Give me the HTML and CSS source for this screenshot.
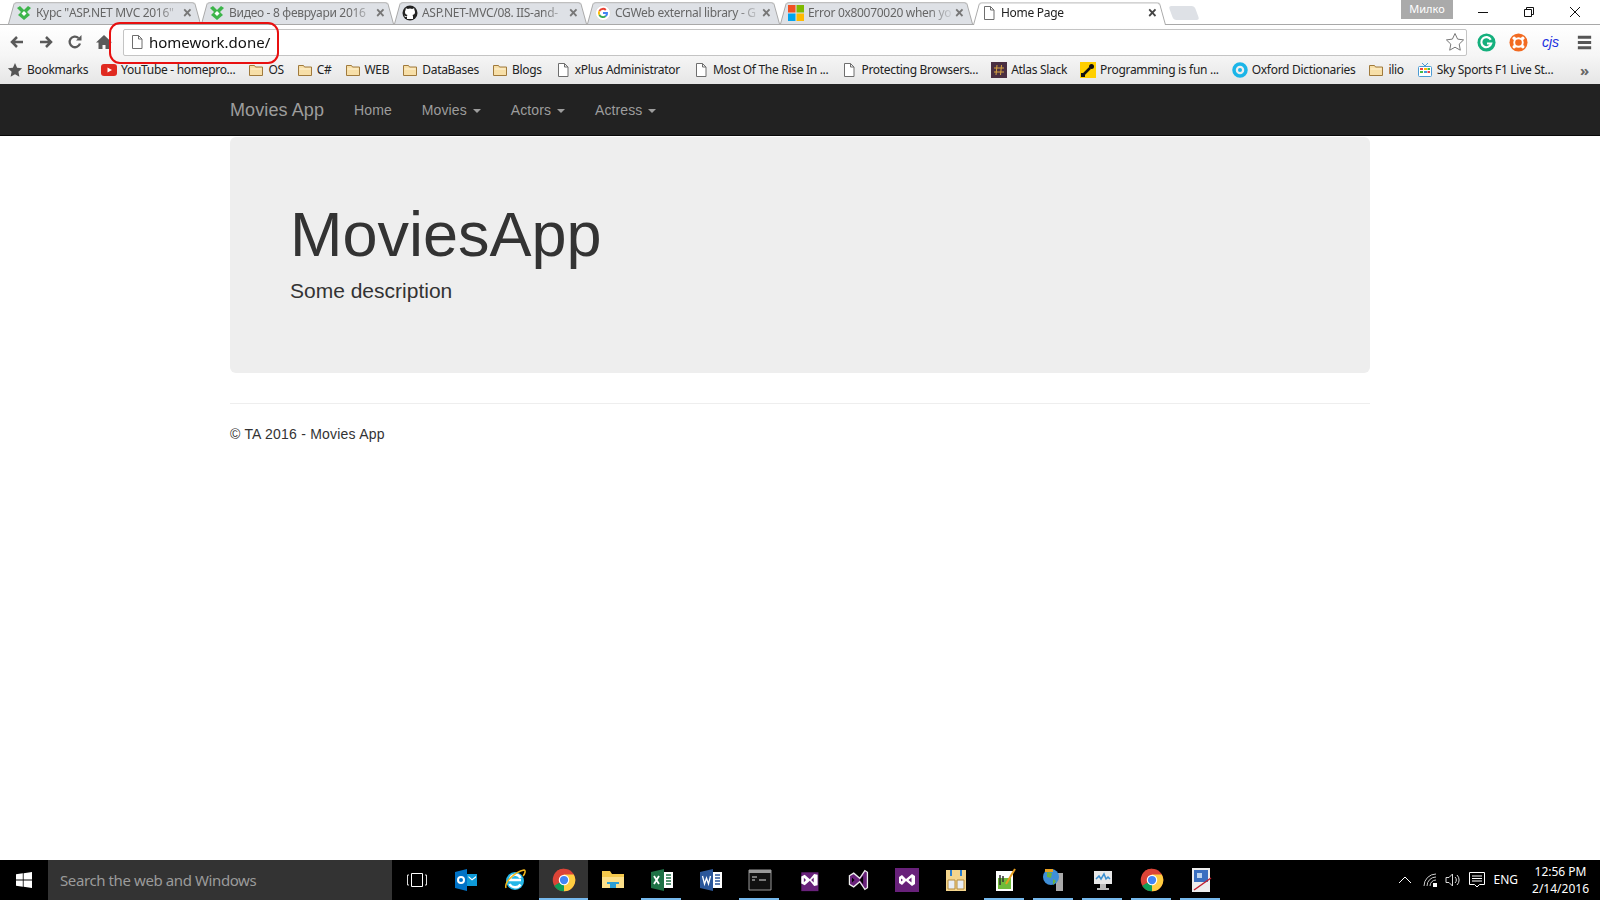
FILE: index.html
```html
<!DOCTYPE html>
<html lang="en">
<head>
    <meta charset="UTF-8">
    <meta name="viewport" content="width=device-width, initial-scale=1.0">
    <title>Home Page</title>
    <link rel="stylesheet" href="styles.css">
</head>
<body>

    <svg class="defs" width="0" height="0">
        <symbol id="page" viewBox="0 0 16 16"><path d="M3.500 1.500h6l3.500 3.500v9.500h-9.500z M9.500 1.500v3.500h3.500" fill="#fff" stroke="#6e6e6e"/></symbol>
        <symbol id="folder" viewBox="0 0 16 16"><path d="M1.500 3.500h5l1 1.500h7v8.500h-13z" fill="#f7dfa8" stroke="#a07a3c"/><path d="M2.500 6.500h11v1h-11z" fill="#fff3d4"/></symbol>
        <symbol id="academy" viewBox="0 0 16 16"><path d="M1 3l3-2 4 4 4-4 3 2-4 4 3 3-6 5-6-5 3-3z" fill="#3db54a"/><path d="M8 6l2.500 2.500-2.500 2.500-2.500-2.500z" fill="#fff"/></symbol>
        <symbol id="chrome" viewBox="0 0 32 32">
            <circle cx="16" cy="16" r="15" fill="#db4437"/>
            <path d="M16 16L3 23.500A15 15 0 0 0 16 31l7-15z" fill="#0f9d58"/>
            <path d="M16 31A15 15 0 0 0 29 8.500H16z" fill="#ffcd40"/>
            <path d="M16 1A15 15 0 0 0 3 8.500L10 20z" fill="#db4437"/>
            <circle cx="16" cy="16" r="7" fill="#fff"/><circle cx="16" cy="16" r="5.500" fill="#4285f4"/>
        </symbol>
    </svg>

    <!-- Browser window -->
    <div class="tabstrip">
        <div class="tab">
            <svg class="ico"><use href="#academy"/></svg>
            <span class="tab-title">Курс "ASP.NET MVC 2016"</span><span class="tab-close">&times;</span>
        </div>
        <div class="tab">
            <svg class="ico"><use href="#academy"/></svg>
            <span class="tab-title">Видео - 8 февруари 2016</span><span class="tab-close">&times;</span>
        </div>
        <div class="tab">
            <svg class="ico" viewBox="0 0 16 16"><circle cx="8" cy="8" r="7.500" fill="#222"/><path d="M5 14v-2c-2 .4-2.500-1-3-1.500 1 0 1.300 1 3 1 0-1 .3-1.300.5-1.500C3.500 9.700 3 8.500 3 7c0-.8.3-1.400.7-1.900-.2-.6-.1-1.300.2-1.800.8 0 1.400.4 1.800.7a6 6 0 0 1 4.600 0c.4-.3 1-.7 1.800-.7.3.5.4 1.200.2 1.800.4.500.7 1.100.7 1.900 0 1.500-.5 2.700-2.500 3 .2.300.5.700.5 1.500v2.500z" fill="#fff"/></svg>
            <span class="tab-title">ASP.NET-MVC/08. IIS-and-</span><span class="tab-close">&times;</span>
        </div>
        <div class="tab">
            <svg class="ico" viewBox="0 0 16 16"><circle cx="8" cy="8" r="7.500" fill="#fff" stroke="#ddd"/><path d="M11.500 4.300A5 5 0 0 0 3.600 5.500l1.500 1.200a3.100 3.100 0 0 1 5-1z" fill="#ea4335"/><path d="M3.600 5.500a5 5 0 0 0 0 5l1.500-1.200a3 3 0 0 1 0-2.600z" fill="#fbbc05"/><path d="M3.600 10.500a5 5 0 0 0 7.700 1.200L9.900 10.500a3.100 3.100 0 0 1-4.800-1.200z" fill="#34a853"/><path d="M13 7H8v2h2.900a2.500 2.500 0 0 1-1 1.500l1.400 1.200A5 5 0 0 0 13 7z" fill="#4285f4"/></svg>
            <span class="tab-title">CGWeb external library - G</span><span class="tab-close">&times;</span>
        </div>
        <div class="tab">
            <svg class="ico" viewBox="0 0 16 16"><path d="M0 0h7.500v7.500H0z" fill="#f25022"/><path d="M8.500 0H16v7.500H8.500z" fill="#7fba00"/><path d="M0 8.500h7.500V16H0z" fill="#00a4ef"/><path d="M8.500 8.500H16V16H8.500z" fill="#ffb900"/></svg>
            <span class="tab-title">Error 0x80070020 when yo</span><span class="tab-close">&times;</span>
        </div>
        <div class="tab active">
            <svg class="ico"><use href="#page"/></svg>
            <span class="tab-title">Home Page</span><span class="tab-close">&times;</span>
        </div>
        <div class="new-tab"></div>
        <div class="profile">Милко</div>
        <div class="win-controls">
            <svg width="12" height="12" viewBox="0 0 12 12"><path d="M1 6.500h10" stroke="#111"/></svg>
            <svg width="12" height="12" viewBox="0 0 12 12"><path d="M1.500 3.500h7v7h-7z M3.500 3.500v-2h7v7h-2" fill="none" stroke="#111"/></svg>
            <svg width="12" height="12" viewBox="0 0 12 12"><path d="M1 1l10 10M11 1L1 11" stroke="#111"/></svg>
        </div>
    </div>

    <div class="toolbar">
        <svg class="nav-ico" viewBox="0 0 16 16"><path d="M14 8H3M8 3L3 8l5 5" fill="none" stroke="#5a5a5a" stroke-width="2.500"/></svg>
        <svg class="nav-ico" viewBox="0 0 16 16"><path d="M2 8h11M8 3l5 5-5 5" fill="none" stroke="#5a5a5a" stroke-width="2.500"/></svg>
        <svg class="nav-ico" viewBox="0 0 16 16"><path d="M13 9.500A5.300 5.300 0 1 1 11.500 4" fill="none" stroke="#5a5a5a" stroke-width="2.300"/><path d="M9 6.500h5.500V1z" fill="#5a5a5a"/></svg>
        <svg class="nav-ico" viewBox="0 0 16 16"><path d="M8 1L0 8.500h2.500V15h4v-4h3v4h4V8.500H16z" fill="#5a5a5a"/></svg>
        <div class="omnibox">
            <svg class="ico"><use href="#page"/></svg>
            <span class="url">homework.done/</span>
            <svg class="star" viewBox="0 0 20 20"><path d="M10 1.500l2.600 5.600 6 .8-4.400 4.200 1.100 6.100L10 15.200l-5.300 3 1.100-6.100-4.400-4.200 6-.8z" fill="#fff" stroke="#777"/></svg>
        </div>
        <div class="extensions">
            <svg class="ext" viewBox="0 0 20 20"><circle cx="10" cy="10" r="9.500" fill="#15b07d"/><path d="M14.500 7A5.300 5.300 0 1 0 15 11h-4.500" fill="none" stroke="#fff" stroke-width="2.200"/></svg>
            <svg class="ext" viewBox="0 0 20 20"><circle cx="10" cy="10" r="9.500" fill="#f26a21"/><circle cx="10" cy="10" r="4.500" fill="none" stroke="#fff" stroke-width="2"/><circle cx="5.500" cy="5.500" r="1.800" fill="#fff"/><circle cx="14.500" cy="5.500" r="1.800" fill="#fff"/><circle cx="5.500" cy="14.500" r="1.800" fill="#fff"/><circle cx="14.500" cy="14.500" r="1.800" fill="#fff"/></svg>
            <span class="cjs">cjs</span>
            <svg class="ext menu-ico" viewBox="0 0 20 20"><path d="M3 3h14v3H3zM3 8.500h14v3H3zM3 14h14v3H3z" fill="#555"/></svg>
        </div>
    </div>

    <div class="bookmarks">
        <a class="bm"><svg class="ico" viewBox="0 0 16 16"><path d="M8 1l2.100 4.700 5 .6-3.700 3.400 1 5L8 12.200l-4.400 2.500 1-5L.9 6.300l5-.6z" fill="#555"/></svg>Bookmarks</a>
        <a class="bm"><svg class="ico" viewBox="0 0 16 16"><rect y="2" width="16" height="12" rx="3" fill="#e02a20"/><path d="M6.500 5.500v5L11 8z" fill="#fff"/></svg>YouTube - homepro...</a>
        <a class="bm"><svg class="ico"><use href="#folder"/></svg>OS</a>
        <a class="bm"><svg class="ico"><use href="#folder"/></svg>C#</a>
        <a class="bm"><svg class="ico"><use href="#folder"/></svg>WEB</a>
        <a class="bm"><svg class="ico"><use href="#folder"/></svg>DataBases</a>
        <a class="bm"><svg class="ico"><use href="#folder"/></svg>Blogs</a>
        <a class="bm"><svg class="ico"><use href="#page"/></svg>xPlus Administrator</a>
        <a class="bm"><svg class="ico"><use href="#page"/></svg>Most Of The Rise In ...</a>
        <a class="bm"><svg class="ico"><use href="#page"/></svg>Protecting Browsers...</a>
        <a class="bm"><svg class="ico" viewBox="0 0 16 16"><path d="M0 0h16v16H0z" fill="#4a2f42"/><path d="M6 3L5 13M10.500 3l-1 10M3 6h10M3 10h10" stroke="#d9a441"/></svg>Atlas Slack</a>
        <a class="bm"><svg class="ico" viewBox="0 0 16 16"><path d="M0 0h16v16H0z" fill="#ffcf00"/><path d="M2 14l8-8" stroke="#111" stroke-width="2.500"/><circle cx="11.500" cy="4.500" r="2.500" fill="#111"/><path d="M1 11h4v4H1z" fill="#111"/></svg>Programming is fun ...</a>
        <a class="bm"><svg class="ico" viewBox="0 0 16 16"><circle cx="8" cy="8" r="6" fill="none" stroke="#1cb5e8" stroke-width="3.500"/><circle cx="8" cy="8" r="2" fill="#1cb5e8"/></svg>Oxford Dictionaries</a>
        <a class="bm"><svg class="ico"><use href="#folder"/></svg>ilio</a>
        <a class="bm"><svg class="ico" viewBox="0 0 16 16"><rect x="1.500" y="4.500" width="13" height="10" rx="1" fill="#fff" stroke="#4a9bd4"/><path d="M5 1l3 3 3-3" fill="none" stroke="#4a9bd4"/><path d="M3 6h3v2H3z" fill="#e44"/><path d="M7 6h3v2H7z" fill="#fb0"/><path d="M10.500 6H13v2h-2.500z" fill="#4b4"/><path d="M3 9h3v2H3z" fill="#4b4"/><path d="M7 9h3v2H7z" fill="#49d"/><path d="M10.500 9H13v2h-2.500z" fill="#e44"/></svg>Sky Sports F1 Live St...</a>
        <span class="bm-more">&raquo;</span>
    </div>

    <!-- Page -->
    <nav class="navbar">
        <div class="wrap nav-row">
            <a class="brand">Movies App</a>
            <a class="nav-link">Home</a>
            <a class="nav-link">Movies <span class="caret"></span></a>
            <a class="nav-link">Actors <span class="caret"></span></a>
            <a class="nav-link">Actress <span class="caret"></span></a>
        </div>
    </nav>

    <main class="page">
        <div class="wrap">
            <div class="jumbotron">
                <h1>MoviesApp</h1>
                <p>Some description</p>
            </div>
            <hr>
            <footer class="site-footer">&copy; TA 2016 - Movies App</footer>
        </div>
    </main>

    <!-- Windows taskbar -->
    <div class="taskbar">
        <div class="start">
            <svg width="16" height="16" viewBox="0 0 16 16"><path d="M0 2.300l6.800-1v6.300H0zM7.600 1.200L16 0v7.600H7.600zM0 8.400h6.800v6.300l-6.800-1zM7.600 8.400H16V16l-8.400-1.200z" fill="#fff"/></svg>
        </div>
        <div class="search">Search the web and Windows</div>
        <div class="task-icons">
            <div class="task"><svg class="tico" viewBox="0 0 24 24"><path d="M6.500 5.500h11v13h-11z" fill="none" stroke="#fff"/><path d="M4 7H2.500v10H4M20 7h1.500v10H20" fill="none" stroke="#ddd"/></svg></div>
            <div class="task"><svg class="tico" viewBox="0 0 24 24"><path d="M1 4l12-3v22L1 20z" fill="#0072c6"/><path d="M13 6h10v12H13z" fill="#0e9ad8"/><path d="M14.500 8l3.500 3 4-3v1.500l-4 3-3.500-3z" fill="#fff"/><circle cx="7" cy="12" r="3" fill="none" stroke="#fff" stroke-width="2"/></svg></div>
            <div class="task"><svg class="tico" viewBox="0 0 24 24"><circle cx="12" cy="13" r="9" fill="#25b7e8"/><path d="M6 12h12M6.500 16a6.500 6.500 0 0 0 11 .5" fill="none" stroke="#fff" stroke-width="2.500"/><path d="M7 12a5.500 5.500 0 0 1 10.500-2" fill="none" stroke="#fff" stroke-width="2.500"/><path d="M3 20C1 14 12 4 21 2c2 0 1 4-1 6" fill="none" stroke="#f4b81c" stroke-width="1.500"/></svg></div>
            <div class="task active"><svg class="tico"><use href="#chrome"/></svg></div>
            <div class="task"><svg class="tico" viewBox="0 0 24 24"><path d="M1 3h8l2 3h12v14H1z" fill="#f5c94c"/><path d="M1 9h22v11H1z" fill="#fde08a"/><path d="M9 15h6v5H9z" fill="#2a9fd8"/><path d="M6 14h12v2H6z" fill="#2a9fd8"/></svg></div>
            <div class="task run"><svg class="tico" viewBox="0 0 24 24"><path d="M1 4l13-3v22L1 20z" fill="#1e7145"/><path d="M14 4h9v16h-9z" fill="#fff"/><path d="M16 7h5M16 10h5M16 13h5M16 16h5" stroke="#1e7145" stroke-width="1.500"/><path d="M4 8l5 8M9 8l-5 8" stroke="#fff" stroke-width="1.800"/></svg></div>
            <div class="task"><svg class="tico" viewBox="0 0 24 24"><path d="M1 4l13-3v22L1 20z" fill="#2b579a"/><path d="M14 4h9v16h-9z" fill="#fff"/><path d="M16 7h5M16 10h5M16 13h5M16 16h5" stroke="#2b579a" stroke-width="1.500"/><path d="M3.500 8l2 8 2-6 2 6 2-8" fill="none" stroke="#fff" stroke-width="1.300"/></svg></div>
            <div class="task run"><svg class="tico" viewBox="0 0 24 24"><path d="M1 2h22v20H1z" fill="#111" stroke="#999"/><path d="M1 2h22v3H1z" fill="#999"/><path d="M4 9h5M4 12h3M11 12h7" stroke="#ddd"/></svg></div>
            <div class="task"><svg class="tico" viewBox="0 0 24 28"><path d="M3 5h20v22H3z" fill="#68217a"/><path d="M3 10l4-2 6 5 5-6 4 1v12l-4 1-5-6-6 5-4-2z" fill="#fff"/><path d="M6 11.500v5l2.500-2.500z M17.500 11v6l-3-3z" fill="#68217a"/></svg></div>
            <div class="task"><svg class="tico" viewBox="0 0 24 28"><path d="M2 9l5-3 7 6 6-9 3 2v18l-3 2-6-9-7 6-5-3z" fill="#68217a" stroke="#eee" stroke-width="1.500"/><path d="M5 11v6l3-3z M18 9v10l-4-5z" fill="#000"/></svg></div>
            <div class="task"><svg class="tico" viewBox="0 0 24 24"><path d="M0 0h24v24H0z" fill="#68217a"/><path d="M4 9l3-2 4 4 6-5 3 2v8l-3 2-6-5-4 4-3-2z" fill="#fff"/><path d="M6 10.500v3l2-1.500z M16.500 9.500v5l-3-2.500z" fill="#68217a"/></svg></div>
            <div class="task"><svg class="tico" viewBox="0 0 24 24"><path d="M2 2h20v21H2z" fill="#f4d58d"/><path d="M7 2v6M17 2v6" stroke="#2a7fd0" stroke-width="2"/><path d="M4 12h7v9H4zM13 12h7v9h-7z" fill="#e8eef6" stroke="#b58a3a"/></svg></div>
            <div class="task run"><svg class="tico" viewBox="0 0 24 24"><path d="M3 3h17v20H3z" fill="#fff"/><path d="M5 10h13v11H5z" fill="#6fbb3a"/><path d="M7 7v10M10 8v6" stroke="#333" stroke-width="1.500"/><path d="M13 16L22 1" stroke="#e8a020" stroke-width="2"/></svg></div>
            <div class="task run"><svg class="tico" viewBox="0 0 24 24"><path d="M14 5h7v18h-7z" fill="#aaa"/><circle cx="9" cy="9" r="8" fill="#3f8fd8"/><path d="M5 4l5 1-1 5-4-1zM11 11l3 2-3 4z" fill="#6cb33f"/><path d="M3 1h8v3H3z" fill="#e8a020"/></svg></div>
            <div class="task run"><svg class="tico" viewBox="0 0 24 24"><path d="M3 3h18v13H3z" fill="#e8e8e8"/><path d="M5 11l3-3 2 3 3-5 2 5 2-2 2 2" fill="none" stroke="#3a8fd0" stroke-width="1.500"/><path d="M9 16h6v4h3v2H6v-2h3z" fill="#bbb"/></svg></div>
            <div class="task run"><svg class="tico"><use href="#chrome"/></svg></div>
            <div class="task run"><svg class="tico" viewBox="0 0 24 24"><path d="M3 0h18v24H3z" fill="#eee"/><path d="M5 2h14v12H5z" fill="#3a6fc0"/><path d="M8 5h5v5H8z" fill="#bcd4f0"/><path d="M5 22L22 10" stroke="#c02030" stroke-width="1.500"/></svg></div>
        </div>
        <div class="tray">
            <svg class="tray-up" width="14" height="14" viewBox="0 0 14 14"><path d="M1 10l6-6 6 6" fill="none" stroke="#fff"/></svg>
            <svg class="tray-net" width="16" height="16" viewBox="0 0 16 16"><path d="M1 14A12 12 0 0 1 13 2M4 14a9 9 0 0 1 9-9M7 14a6 6 0 0 1 6-6" fill="none" stroke="#ccc"/><path d="M10 11h4v4h-4z" fill="#fff"/></svg>
            <svg class="tray-vol" width="16" height="16" viewBox="0 0 16 16"><path d="M1 5.500h3L7.500 2v12L4 10.500H1z" fill="none" stroke="#ddd"/><path d="M10 5a4 4 0 0 1 0 6M12 3a7 7 0 0 1 0 10" fill="none" stroke="#ddd"/></svg>
            <svg width="18" height="18" viewBox="0 0 18 18"><path d="M1.500 1.500h15v12h-5L9 16l-2.500-2.500h-5z" fill="none" stroke="#fff"/><path d="M4 5h10M4 7.500h10M4 10h10" stroke="#fff"/></svg>
            <span class="lang">ENG</span>
            <div class="clock"><span>12:56 PM</span><span>2/14/2016</span></div>
        </div>
    </div>

    <!-- Red mark drawn over the address -->
    <div class="highlight"></div>

</body>
</html>
```

FILE: styles.css
```css
html, body {
    margin: 0;
    padding: 0;
    height: 100%;
    overflow: hidden;
}

body {
    display: flex;
    flex-direction: column;
    height: 900px;
    font-family: "Liberation Sans", Arial, sans-serif;
    font-size: 14px;
    line-height: 20px;
    color: #333;
    background: #fff;
}

.defs {
    position: absolute;
}

.ico {
    width: 16px;
    height: 16px;
    flex: none;
}

/* Browser tabs */
.tabstrip {
    display: flex;
    height: 24px;
    padding-left: 8px;
    background: #fff;
    border-bottom: 1px solid #a9a9a9;
    font-family: "Noto Sans", sans-serif;
    font-size: 12px;
    letter-spacing: -0.3px;
    color: #666;
}

.tab {
    position: relative;
    z-index: 0;
    display: flex;
    align-items: center;
    width: 193px;
    height: 24px;
    padding: 2px 9px 0 8px;
    box-sizing: border-box;
}

.tab::before {
    content: "";
    position: absolute;
    top: 0;
    left: 0;
    right: 0;
    bottom: 0;
    z-index: -1;
    background: #dee1e6;
    border: 1px solid #a9a9a9;
    border-bottom: 0;
    border-radius: 3px 3px 0 0;
    transform: perspective(100px) rotateX(16deg);
    transform-origin: bottom;
}

.tab.active {
    color: #222;
}

.tab.active::before {
    background: #fff;
    bottom: -1px;
}

.tab-title {
    flex: 1;
    margin-left: 4px;
    overflow: hidden;
    white-space: nowrap;
    -webkit-mask-image: linear-gradient(to right, #000 82%, transparent);
    mask-image: linear-gradient(to right, #000 82%, transparent);
}

.tab.active .tab-title {
    -webkit-mask-image: none;
    mask-image: none;
}

.tab-close {
    font-size: 17px;
    font-weight: bold;
    color: #777;
}

.tab.active .tab-close {
    color: #444;
}

.new-tab {
    width: 26px;
    height: 14px;
    margin: 6px 0 0 5px;
    background: #dee1e6;
    border-radius: 3px;
    transform: skewX(20deg);
}

.profile {
    width: 52px;
    height: 19px;
    margin-left: auto;
    background: #aaa;
    color: #fff;
    font-size: 11px;
    letter-spacing: 0;
    line-height: 18px;
    text-align: center;
}

.win-controls {
    display: flex;
    gap: 34px;
    align-items: center;
    height: 24px;
    padding: 0 19px 0 24px;
}

/* Address bar row */
.toolbar {
    display: flex;
    align-items: center;
    height: 30px;
    padding: 4px 0 0 9px;
    box-sizing: border-box;
    background: linear-gradient(#fff, #f6f6f6);
}

.nav-ico {
    width: 16px;
    height: 16px;
    margin-right: 13px;
    flex: none;
}

.omnibox {
    display: flex;
    align-items: center;
    width: 1344px;
    height: 27px;
    margin-left: -2px;
    padding: 0 1px 0 5px;
    box-sizing: border-box;
    position: relative;
    background: #fff;
    border: 1px solid #c4c4c4;
    border-radius: 2px;
    flex: none;
}

.url {
    flex: 1;
    margin-left: 4px;
    font-family: "Noto Sans", sans-serif;
    font-size: 15px;
    color: #111;
}

.star {
    width: 20px;
    height: 20px;
}

.extensions {
    display: flex;
    align-items: center;
    gap: 13px;
    margin-left: 10px;
}

.ext {
    width: 19px;
    height: 19px;
}

.menu-ico {
    margin-left: 2px;
}

.cjs {
    width: 19px;
    font-style: italic;
    font-size: 14px;
    color: #1a2fe0;
    text-align: center;
}

/* Bookmarks row */
.bookmarks {
    display: flex;
    align-items: center;
    height: 29px;
    padding-left: 7px;
    background: linear-gradient(#f6f6f6, #e6e6e6);
    font-family: "Noto Sans", sans-serif;
    font-size: 12px;
    letter-spacing: -0.3px;
    color: #222;
    white-space: nowrap;
}

.bm {
    display: flex;
    align-items: center;
    gap: 4px;
    margin-right: 13px;
}

.bm-more {
    margin-left: auto;
    padding-right: 11px;
    font-size: 15px;
    font-weight: bold;
    color: #666;
}

/* Site navbar */
.navbar {
    height: 52px;
    box-sizing: border-box;
    background: #222;
    border-bottom: 1px solid #080808;
    flex: none;
}

.wrap {
    width: 1140px;
    margin: 0 auto;
}

.nav-row {
    display: flex;
    letter-spacing: 0.1px;
}

.brand {
    padding: 16px 15px 15px 0;
    font-size: 18px;
    color: #9d9d9d;
}

.nav-link {
    padding: 16px 15px 15px;
    color: #9d9d9d;
}

.caret {
    display: inline-block;
    margin-left: 2px;
    vertical-align: middle;
    border-top: 4px solid #9d9d9d;
    border-left: 4px solid transparent;
    border-right: 4px solid transparent;
}

/* Content */
.page {
    flex: 1;
}

.jumbotron {
    padding: 48px 60px;
    margin-top: 1px;
    background: #eee;
    border-radius: 6px;
}

.jumbotron h1 {
    margin: 15px 0 7px;
    font-size: 63px;
    font-weight: 500;
    line-height: 1.1;
}

.jumbotron p {
    margin: 0 0 19px;
    font-size: 21px;
    line-height: 30px;
}

hr {
    margin: 30px 0 20px;
    border: 0;
    border-top: 1px solid #eee;
}

.site-footer {
    letter-spacing: 0.22px;
}

/* Taskbar */
.taskbar {
    display: flex;
    height: 40px;
    background: #000;
    color: #fff;
    flex: none;
}

.start {
    display: flex;
    align-items: center;
    justify-content: center;
    width: 48px;
}

.search {
    width: 344px;
    padding-left: 12px;
    box-sizing: border-box;
    background: #333;
    color: #9b9b9b;
    font-family: "Noto Sans", sans-serif;
    font-size: 15px;
    letter-spacing: -0.4px;
    line-height: 40px;
}

.task-icons {
    display: flex;
}

.task {
    display: flex;
    align-items: center;
    justify-content: center;
    position: relative;
    width: 49px;
    height: 40px;
}

.task.active {
    background: #333;
    box-shadow: inset 0 -2px 0 #76b9ed;
}

.task.run::after {
    content: "";
    position: absolute;
    left: 4px;
    right: 5px;
    bottom: 0;
    height: 2px;
    background: #76b9ed;
}

.tico {
    width: 24px;
    height: 24px;
}

.tray {
    display: flex;
    align-items: center;
    gap: 8px;
    margin-left: auto;
    padding-right: 11px;
    font-family: "Noto Sans", sans-serif;
    font-size: 12px;
}

.tray-up {
    margin-right: 3px;
}

.tray-net {
    margin-right: -2px;
}

.tray-vol {
    margin-right: -1px;
}

.lang {
    margin: 0 6px 0 -1px;
}

.clock {
    display: flex;
    flex-direction: column;
    align-items: center;
    line-height: 17px;
}

.highlight {
    position: absolute;
    left: 109px;
    top: 22px;
    width: 166px;
    height: 38px;
    border: 2px solid #e81010;
    border-radius: 11px;
}
```
